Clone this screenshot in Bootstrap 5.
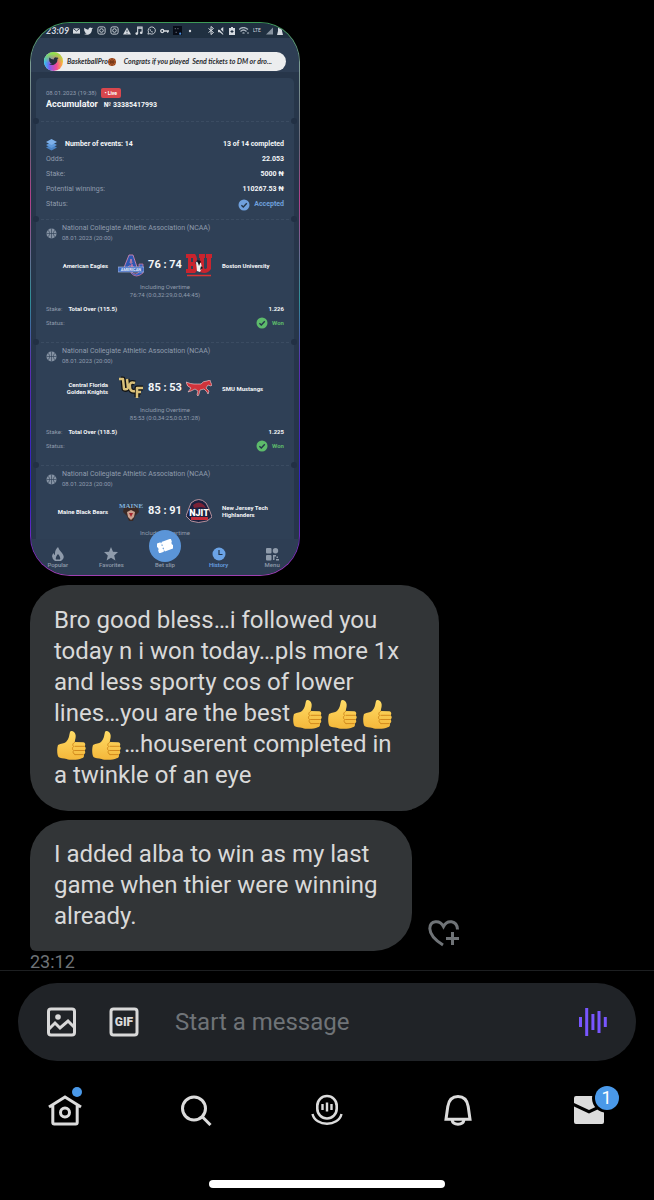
<!DOCTYPE html>
<html lang="en" data-bs-theme="dark">
<head>
<meta charset="utf-8">
<meta name="viewport" content="width=device-width, initial-scale=1">
<title>Messages</title>
<link href="https://cdn.jsdelivr.net/npm/bootstrap@5.3.0/dist/css/bootstrap.min.css" rel="stylesheet">
<style>
body{background:#000;color:#d9d9d9;font-family:Roboto,"Liberation Sans",sans-serif}
svg{display:block;flex-shrink:0}
.thread{padding:22px 30px 0;min-height:0}
/* shared phone capture */
.shot{width:270px;border-radius:40px;padding:1px;background:linear-gradient(180deg,#3d9a57,#7d9a94 8%,#667 22%,#b0408a 32%,#2f8f96 50%,#5b2fae 62%,#2a22c0 85%,#8a2fc0 97%,#a040b0);margin:0}
.screen{border-radius:39px;background:#27364a;overflow:hidden;font-size:6px;line-height:8px;color:#8f9cad}
.sysbar{height:15px;background:#203041;padding:0 16px 0 15px;color:#d5dae0}
.clock{font:italic bold 9px/14px Lato,sans-serif}
.appbar{height:34px;background:#2e3e54}
.toast-line{position:absolute;left:13px;right:13px;top:14px;height:19px;border-radius:10px;background:#ecedee;color:#2a2c30;font:italic bold 7px/18px Lato,sans-serif}
.sheet{padding:6px 5px 0;overflow:hidden}
.slip{background:#2f4056;padding:0 10px;position:relative}
.slip+.slip{border-top:1px dashed #3b4c62}
.slip+.slip::before,.slip+.slip::after{content:"";position:absolute;top:-4px;width:6px;height:6px;border-radius:50%;background:#223044}
.slip::before{left:-3px}.slip::after{right:-3px}
.slip-head{border-radius:5px 5px 0 0;padding-top:10px;padding-bottom:9px}
.slip-sum{padding-top:15px;padding-bottom:7px;font-size:7px;line-height:15px}
.slip-game{padding-top:3px;padding-bottom:12px}
.slip-cut{padding-bottom:2px}
.white{color:#f4f6f8;font-weight:700}
.live{background:#d9474d;color:#fff;border-radius:2px;padding:0 4px;font-weight:700;font-size:5px}
.title-sm{font-size:9px;line-height:13px}
.title-no{font-size:7px}
.head-text{margin-left:5px}
.league{font-size:7px;line-height:10px}
.when{line-height:10px}
.teams{display:grid;grid-template-columns:1fr 26px 42px 26px 1fr;align-items:center;height:28px;margin-top:8px}
.team{line-height:7px;padding:0 10px;white-space:nowrap}
.score{font-size:11px}
.periods{margin:4px 0 3px}
.stat{line-height:14px}
.stat-name{margin:0 auto 0 6px}
.muted{color:#8f9cad}
.won{color:#5dbb6b}.blue{color:#6fa0dd}
.tabs{height:36px;background:#2e3e54;padding-top:8px;color:#8f9bab;position:relative;font-weight:500}
.tabs a{color:inherit;text-decoration:none;flex:1 1 0}
.tabs a.on{color:#6ba3e6}
.tab-gap{height:14px}
.fab{position:absolute;left:50%;top:-9px;margin-left:-16px;width:32px;height:32px;border-radius:50%;background:#5b95d8}
/* bubbles */
.bubble-gap{margin-top:9px}
.msg{background:#323537;border-radius:38px;padding:19px 24px;font-size:24px;line-height:31px;width:fit-content}
.msg-a{max-width:409px;padding:20px 30px 20px 24px}
.msg-b{max-width:382px;border-bottom-left-radius:6px}
.thumb{display:inline-block;vertical-align:-5px;margin:-4px 3px}
.time{font-size:18px;line-height:18px;margin-top:2px;color:#6f7377}
.plain{background:none;border:0;padding:0;color:inherit}
/* composer and tabs */
.foot{border-top:1px solid #1d1f21;padding-top:12px;background:#000}
.composer{height:78px;border-radius:39px;background:#202327;margin:0 18px;padding:0 28px}
.composer input{background:none;border:0;outline:0;color:#d9d9d9;font-size:24px;min-width:0;margin-left:34px}
.composer input::placeholder{color:#6f7377;opacity:1}
.mainnav{height:98px}
.mainnav a{color:#dcdcdc}
.dot{position:absolute;right:0;top:-7px;width:10px;height:10px;border-radius:50%;background:#4a99e9}
.count{position:absolute;left:22px;top:-10px;width:24px;height:24px;border-radius:50%;background:#4a99e9;box-shadow:0 0 0 3px #000;color:#fff;font-size:18px;line-height:24px;text-align:center}
.homebar{width:36%;height:8px;border-radius:4px;background:#fff;margin:21px auto 12px}
</style>
</head>
<body>
<svg width="0" height="0" class="position-absolute" aria-hidden="true">
<defs>
<linearGradient id="skin" x1="0" y1="0" x2="0" y2="1"><stop offset="0" stop-color="#ffdc66"/><stop offset="1" stop-color="#f4b73a"/></linearGradient>
<symbol id="thumb" viewBox="0 0 29 30"><path d="M1 14c3-2 6-1 8-3 3-3 3-6 4-10 .6-2 5-1 5.600 3 .4 3-.8 5-.8 7l8.500.2c2 .2 2.600 2.600 1.200 4 1.700 1 1.500 3.500 0 4.300 1.300 1.200.8 3.400-.8 4 .8 1.600-.2 3.400-2 3.800-4 2-12 1.800-15 .6C6.500 27 3 27.500 1.500 26-.3 23 0 17 1 14z" fill="url(#skin)"/><path d="M18 15.300h9M17.600 19.500H27M18 23.600h8M17.800 11.300c-2 .9-2.700 2.700-1.200 4.200-1.500 1-1.500 3.200 0 4-1 1.400-.5 3.300 1.200 4" fill="none" stroke="#d28a1d" stroke-width="1" stroke-linecap="round"/></symbol>
<symbol id="ball" viewBox="0 0 12 12"><circle cx="6" cy="6" r="5.500" fill="#8592a3"/><path d="M6 .5v11M.5 6h11M2 2.200c2.600 2 2.600 5.600 0 7.600M10 2.200c-2.600 2-2.600 5.600 0 7.600" stroke="#2f4056" fill="none" stroke-width=".7"/></symbol>
<symbol id="tick" viewBox="0 0 12 12"><circle cx="6" cy="6" r="5.500" fill="currentColor"/><path d="M3.400 6.200l1.900 1.800 3.500-3.700" stroke="#24364a" stroke-width="1.400" fill="none"/></symbol>
</defs></svg>
<div class="d-flex flex-column vh-100">
<main class="thread flex-grow-1 overflow-hidden">
<figure class="shot"><div class="screen">
 <div class="sysbar d-flex align-items-center gap-1">
  <span class="clock">23:09</span>
  <svg width="7" height="8" viewBox="0 0 8 8"><rect y="1" width="8" height="6" fill="#d5dae0"/><path d="M0 1l4 3 4-3" stroke="#203041" fill="none"/></svg>
  <svg width="9" height="8" viewBox="0 0 24 20"><path d="M24 3l-3 2c1 9-6 15-13 15-3 0-6-1-8-2 3 0 5-1 7-2-2 0-4-1-5-3h2C2 12 0 10 0 8l2 1C0 7 0 4 1 1c3 3 6 5 11 5 0-6 6-7 8-4l3-1-1 2z" fill="#d5dae0"/></svg>
  <svg width="9" height="9" viewBox="0 0 10 10" fill="none" stroke="#d5dae0"><rect x="1" y="1" width="8" height="8" rx="2"/><circle cx="5" cy="5" r="2"/></svg>
  <svg width="9" height="9" viewBox="0 0 10 10" fill="none" stroke="#d5dae0"><rect x="1" y="1" width="8" height="8" rx="2"/><circle cx="5" cy="5" r="2"/></svg>
  <svg width="8" height="8" viewBox="0 0 10 9"><path d="M5 0l5 9H0z" fill="#d5dae0"/><path d="M5 3v3M5 7v1" stroke="#203041"/></svg>
  <svg width="8" height="9" viewBox="0 0 9 10"><path d="M3 8V1h5v6M3 2.500h5" stroke="#d5dae0" fill="none" stroke-width="1.200"/><circle cx="2" cy="8.500" r="1.500" fill="#d5dae0"/><circle cx="7" cy="7.500" r="1.500" fill="#d5dae0"/></svg>
  <svg width="9" height="9" viewBox="0 0 10 10" fill="none" stroke="#d5dae0"><path d="M1 9l.7-2.200A4 4 0 1 1 3.300 8.500z"/><path d="M3.500 3.500c0 2 1 3 3 3.200"/></svg>
  <svg width="9" height="6" viewBox="0 0 10 6" fill="none" stroke="#d5dae0" stroke-width="1.400"><circle cx="2.500" cy="3" r="1.700"/><path d="M4 3h6M8.500 3v2"/></svg>
  <svg width="9" height="9" viewBox="0 0 10 10"><rect width="10" height="10" fill="#080d18"/><path d="M2 3h1M5 3h1M3 7h1" stroke="#aab"/><circle cx="8" cy="8.500" r="1.200" fill="#4a90e2"/></svg>
  <svg width="6" height="4" viewBox="0 0 6 4"><circle cx="4" cy="2" r="1.200" fill="#d5dae0"/></svg>
  <span class="flex-grow-1"></span>
  <svg width="6" height="9" viewBox="0 0 6 9"><path d="M.5 2.500l5 4-2.500 2v-8l2.500 2-5 4" stroke="#d5dae0" fill="none"/></svg>
  <svg width="7" height="8" viewBox="0 0 8 9"><path d="M0 3h2l4-3v9L2 6H0z" fill="#d5dae0"/><path d="M0 0l8 9" stroke="#203041" stroke-width="1.500"/></svg>
  <svg width="6" height="8" viewBox="0 0 6 8"><path d="M0 1h2V0h2v1h2v7H0z" fill="#d5dae0"/><path d="M3 3v3M1.500 4.500h3" stroke="#203041"/></svg>
  <svg width="10" height="8" viewBox="0 0 10 8" fill="none" stroke="#a9b3be" stroke-width="1.200"><path d="M0 2.500q4.500-4 9 0M1.500 4.500q3-3 6 0M3.500 6.300q1-1 2 0M8 6h2"/></svg>
  <svg width="9" height="8" viewBox="0 0 9 8"><text x="0" y="5" font-size="5" fill="#d5dae0">LTE</text></svg>
  <svg width="7" height="8" viewBox="0 0 8 8"><path d="M8 0v8H0z" fill="#8793a0"/></svg>
  <svg width="6" height="8" viewBox="0 0 6 8"><path d="M1 0h4v4l1 4H0l1-4z" fill="#d5dae0"/></svg>
 </div>
 <div class="appbar position-relative">
  <div class="toast-line d-flex text-nowrap">
   <svg width="19" height="19" viewBox="0 0 19 19"><defs><linearGradient id="r1"><stop offset="0" stop-color="#24c8f5"/><stop offset=".3" stop-color="#7e5cf0"/><stop offset=".65" stop-color="#f0479a"/><stop offset="1" stop-color="#fbc02d"/></linearGradient><linearGradient id="r2" x1="0" y1="0" x2="0" y2="1"><stop offset="0" stop-color="#8af53c"/><stop offset=".6" stop-color="#8af53c" stop-opacity="0"/></linearGradient></defs><circle cx="9.500" cy="9.500" r="9.500" fill="url(#r1)"/><circle cx="9.500" cy="9.500" r="9.500" fill="url(#r2)"/><path transform="translate(5 5) scale(.4)" d="M24 3l-3 2c1 9-6 15-13 15-3 0-6-1-8-2 3 0 5-1 7-2-2 0-4-1-5-3h2C2 12 0 10 0 8l2 1C0 7 0 4 1 1c3 3 6 5 11 5 0-6 6-7 8-4l3-1-1 2z" fill="#24303c"/></svg>
   <span class="ms-1">BasketballPro</span>
   <svg class="align-self-center" width="8" height="8" viewBox="0 0 12 12"><circle cx="6" cy="6" r="6" fill="#b45a2a"/><path d="M6 0v12M0 6h12M2 2c3 2 3 6 0 8M10 2c-3 2-3 6 0 8" stroke="#5c2a12" fill="none"/></svg>
   <span class="ms-1 ps-1">Congrats if you played&nbsp; Send tickets to DM or dro...</span>
  </div>
 </div>
 <div class="sheet">
  <section class="slip slip-head">
   <div class="when d-flex align-items-center">08.01.2023 (19:38)<span class="live ms-1">• Live</span></div>
   <div class="title-sm white">Accumulator <span class="title-no ms-1">№ 33385417993</span></div>
  </section>
  <section class="slip slip-sum">
   <div class="d-flex align-items-center white"><svg width="11" height="12" viewBox="0 0 11 12"><path d="M5.500 5.500L0 8.500l5.500 3 5.500-3z" fill="#4a83c4"/><path d="M5.500 3L0 6l5.500 3L11 6z" fill="#5e98da"/><path d="M5.500 0L0 3l5.500 3L11 3z" fill="#7db0ea"/></svg><span class="ms-2 me-auto">Number of events: 14</span>13 of 14 completed</div>
   <div class="d-flex justify-content-between"><span>Odds:</span><span class="white">22.053</span></div>
   <div class="d-flex justify-content-between"><span>Stake:</span><span class="white">5000 ₦</span></div>
   <div class="d-flex justify-content-between"><span>Potential winnings:</span><span class="white">110267.53 ₦</span></div>
   <div class="d-flex align-items-center blue"><span class="me-auto muted">Status:</span><svg width="12" height="12"><use href="#tick"/></svg><b class="ms-1">Accepted</b></div>
  </section>
  <section class="slip slip-game">
   <div class="d-flex align-items-center"><svg width="11" height="11"><use href="#ball"/></svg><div class="head-text"><div class="league">National Collegiate Athletic Association (NCAA)</div><div class="when">08.01.2023 (20:00)</div></div></div>
   <div class="teams white">
    <div class="team text-end">American Eagles</div>
    <svg width="26" height="24" viewBox="0 0 26 24"><path d="M5 17L11 2h4l5 15h-4l-1-4h-4l-2 4zM12 10h2l-1-4z" fill="#2f57b0" stroke="#e08bb5" stroke-width=".8"/><path d="M14 11v8q3 4 7 0v-8h4v9q-7 6-12 0z" fill="#3164c4" stroke="#e07aa5" stroke-width=".7"/><path d="M0 14h26v5H0z" fill="#3c69c0" stroke="#b9c8ea" stroke-width=".6"/><text x="13" y="18" text-anchor="middle" font-size="4" font-weight="700" fill="#e9eef8">AMERICAN</text></svg>
    <div class="score text-center text-nowrap">76 : 74</div>
    <svg width="26" height="24" viewBox="0 0 26 24"><path d="M0 1h9q4 5 0 9 5 5 0 10H0v-4h2V5H0zM5 5v4h2V5zm0 8v3h2v-3zM13 1h6v4h-1v10q1 2 3 0V5h-1V1h6v4h-1v11q-4 6-11 3V5h-1z" fill="#c9242e" fill-rule="evenodd"/><path d="M10 9l5 1 1 5-2 4-3-1z" fill="#eee"/><path d="M11 7l4 1-2 5zM15 13l2 2-3 2z" fill="#14161c"/><path d="M1 22.500h24" stroke="#d33" stroke-width="1.500"/></svg>
    <div class="team">Boston University</div>
   </div>
   <div class="text-center periods">Including Overtime<br>76:74 (0:0,32:29,0:0,44:45)</div>
   <div class="stat d-flex"><span>Stake:</span><span class="white stat-name">Total Over (115.5)</span><span class="white">1.226</span></div>
   <div class="stat d-flex align-items-center won"><span class="me-auto muted">Status:</span><svg width="12" height="12"><use href="#tick"/></svg><b class="ms-1">Won</b></div>
  </section>
  <section class="slip slip-game">
   <div class="d-flex align-items-center"><svg width="11" height="11"><use href="#ball"/></svg><div class="head-text"><div class="league">National Collegiate Athletic Association (NCAA)</div><div class="when">08.01.2023 (20:00)</div></div></div>
   <div class="teams white">
    <div class="team text-end">Central Florida<br>Golden Knights</div>
    <svg width="26" height="24" viewBox="0 0 26 24" fill="none" stroke-linejoin="round"><g stroke="#111" stroke-width="5"><path d="M3 3h2l1 10q3 1 4-1L9 3M17 7q-6-2-5 4 0 5 5 4M19 21v-9h6M19 16h4"/></g><g stroke="#d9c07a" stroke-width="2.500"><path d="M1 3h4l1 10q3 1 4-1L9 3M17 7q-6-2-5 4 0 5 5 4M19 22v-10h6M19 16h4"/></g></svg>
    <div class="score text-center text-nowrap">85 : 53</div>
    <svg width="26" height="16" viewBox="0 0 26 16"><path d="M0 2q5 2 8 2 4 0 7 0 2-3 6-3l3-1 .5 2L26 5l-1 1-3-1-2 3 3 3-1 3-1-2-3-3-4 1-1 4-1 2-1-1 1-4-3-2-4 2-3 1 3-4q-4-1-5-6z" fill="#d0333b" stroke="#f0d5d8" stroke-width=".6"/></svg>
    <div class="team">SMU Mustangs</div>
   </div>
   <div class="text-center periods">Including Overtime<br>85:53 (0:0,34:25,0:0,51:28)</div>
   <div class="stat d-flex"><span>Stake:</span><span class="white stat-name">Total Over (118.5)</span><span class="white">1.225</span></div>
   <div class="stat d-flex align-items-center won"><span class="me-auto muted">Status:</span><svg width="12" height="12"><use href="#tick"/></svg><b class="ms-1">Won</b></div>
  </section>
  <section class="slip slip-game slip-cut">
   <div class="d-flex align-items-center"><svg width="11" height="11"><use href="#ball"/></svg><div class="head-text"><div class="league">National Collegiate Athletic Association (NCAA)</div><div class="when">08.01.2023 (20:00)</div></div></div>
   <div class="teams white">
    <div class="team text-end">Maine Black Bears</div>
    <svg width="26" height="22" viewBox="0 0 26 22"><path d="M6 7q7-4 14 0l1 5-4 4-2 5h-4l-2-5-4-4z" fill="#3a2a26"/><path d="M9 12l4-2 4 2-1 5-3 3-3-3z" fill="#c9a08f"/><path d="M11 13h4l-2 4z" fill="#a3242c"/><text x="13" y="8" text-anchor="middle" font-family="Liberation Serif" font-size="7" font-weight="700" fill="#7fb2dc">MAINE</text></svg>
    <div class="score text-center text-nowrap">83 : 91</div>
    <svg width="26" height="24" viewBox="0 0 26 24"><path d="M5 4q8-7 15 0l3 6 3 8-5 4q-9 3-16 0l-5-5 3-8z" fill="#1b2140" stroke="#d9a9b0" stroke-width=".8"/><path d="M7 6q6-5 11 0l2 3-5-1-7 1z" fill="#7a2135"/><path d="M5 18h17v3H5z" fill="#c22b39"/><text x="13" y="17" text-anchor="middle" font-size="9" font-weight="900" fill="#fff">NJIT</text></svg>
    <div class="team">New Jersey Tech<br>Highlanders</div>
   </div>
   <div class="text-center mt-1">Including Overtime</div>
  </section>
 </div>
 <nav class="tabs d-flex text-center">
  <a href="#"><svg class="mx-auto" width="12" height="14" viewBox="0 0 12 14"><path d="M6 0q1 3 4 6 4 5-1 8H3Q-2 10 1.500 6q.5 2 1.500 2Q2.500 3 6 0zM6 7q-3 3-2 5.500h4Q9 10 6 7z" fill="currentColor" fill-rule="evenodd"/></svg>Popular</a>
  <a href="#"><svg class="mx-auto" width="14" height="14" viewBox="0 0 14 14"><path d="M7 0l2 4.700 5 .4-3.800 3.300L11.400 13.500 7 10.800l-4.400 2.700 1.200-5.100L0 5.100l5-.4z" fill="currentColor"/></svg>Favorites</a>
  <a href="#"><span class="fab d-flex align-items-center justify-content-center"><svg width="16" height="14" viewBox="0 0 16 14"><path transform="rotate(-20 8 7)" d="M0 2h5v1h1V2h10v3q-2 2 0 4v3H6v-1H5v1H0V9q2-2 0-4zM5 4.500v1.500h1V4.500zm0 3.500v1.500h1V8z" fill="#fff" fill-rule="evenodd"/></svg></span><span class="d-block tab-gap"></span>Bet slip</a>
  <a href="#" class="on"><svg class="mx-auto" width="14" height="14" viewBox="0 0 14 14"><circle cx="7" cy="7" r="6.500" fill="currentColor"/><path d="M7 3v4.500h3.500" stroke="#22344a" stroke-width="1.200" fill="none"/></svg>History</a>
  <a href="#"><svg class="mx-auto" width="13" height="14" viewBox="0 0 13 14" fill="currentColor"><rect y="1" width="5.500" height="5.500" rx="1"/><circle cx="9.500" cy="3.700" r="2.700"/><rect y="8" width="5.500" height="5.500" rx="1"/><path d="M7 8h3v1.500H8.500V13H7zM10.500 9.500H12v1.500h-1.500zM10 12h3v1.500h-3z"/></svg>Menu</a>
 </nav>
</div></figure>
<div class="msg msg-a bubble-gap">Bro good bless…i followed you today n i won today…pls more 1x and less sporty cos of lower lines…you are the best<svg class="thumb" role="img" aria-label="thumbs up" width="29" height="30"><use href="#thumb"/></svg><svg class="thumb" role="img" aria-label="thumbs up" width="29" height="30"><use href="#thumb"/></svg><svg class="thumb" role="img" aria-label="thumbs up" width="29" height="30"><use href="#thumb"/></svg><wbr><svg class="thumb" role="img" aria-label="thumbs up" width="29" height="30"><use href="#thumb"/></svg><svg class="thumb" role="img" aria-label="thumbs up" width="29" height="30"><use href="#thumb"/></svg>…houserent completed in a twinkle of an eye</div>
<div class="d-flex align-items-end gap-3 bubble-gap">
 <div class="msg msg-b">I added alba to win as my last game when thier were winning already.</div>
 <button class="plain" aria-label="Add reaction"><svg width="32" height="32" viewBox="0 0 32 32" fill="none" stroke="#6f7377" stroke-width="3"><path d="M15 26Q2 18 1.800 9.500C2 1 12 .5 15.500 7.500 19 .5 29 1 29.500 10.500M24.500 13v13M18 19.500h13"/></svg></button>
</div>
<div class="time">23:12</div>
</main>
<footer class="foot">
 <form class="composer d-flex align-items-center">
  <button type="button" class="plain" aria-label="Photo"><svg width="31" height="30" viewBox="0 0 31 30" fill="none" stroke="#d9d9d9" stroke-width="3"><rect x="2.500" y="2" width="26" height="26" rx="2.500"/><path d="M3 22l6-6 5 5 8-7 6 6"/><circle cx="12" cy="10" r="2.800" fill="#d9d9d9" stroke="none"/></svg></button>
  <button type="button" class="plain ms-4" aria-label="GIF"><svg class="ms-2" width="30" height="30" viewBox="0 0 30 30"><rect x="2" y="2" width="26" height="26" rx="2.500" fill="none" stroke="#d9d9d9" stroke-width="3"/><text x="15" y="19" text-anchor="middle" font-size="12" font-weight="900" fill="#d9d9d9">GIF</text></svg></button>
  <input class="flex-grow-1" type="text" placeholder="Start a message" aria-label="Message">
  <button type="button" class="plain" aria-label="Voice message"><svg width="30" height="30" viewBox="0 0 30 30" stroke="#7856ff" stroke-width="3"><path d="M2.500 10v10M8.700 1v28M14.900 7v16M21 4v22M27.300 10v10"/></svg></button>
 </form>
 <nav class="mainnav row g-0 align-items-center">
  <div class="col d-flex justify-content-center"><a href="#" class="position-relative" aria-label="Home"><svg width="34" height="32" viewBox="0 0 34 32" fill="none" stroke="currentColor" stroke-width="3"><path d="M1 13L17 3l16 10M4.800 11v17.500q0 1.500 1.500 1.500h21.400q1.500 0 1.500-1.500V11"/><circle cx="17" cy="18.500" r="4.500"/></svg><span class="dot"></span></a></div>
  <div class="col d-flex justify-content-center"><a href="#" aria-label="Search"><svg width="31" height="31" viewBox="0 0 31 31" fill="none" stroke="currentColor" stroke-width="3"><circle cx="13" cy="13.500" r="11.500"/><path d="M21.500 22l8 8"/></svg></a></div>
  <div class="col d-flex justify-content-center"><a href="#" aria-label="Spaces"><svg width="32" height="32" viewBox="0 0 32 32" fill="none" stroke="currentColor" stroke-width="2.600"><rect x="6.300" y="2" width="19.400" height="22.500" rx="9.700"/><path d="M1.500 20c3 13 26 13 29 0M11.500 10v6M16 8.500v9M20.500 10v6" stroke-width="2.400"/></svg></a></div>
  <div class="col d-flex justify-content-center"><a href="#" aria-label="Notifications"><svg width="30" height="32" viewBox="0 0 30 32" fill="none" stroke="currentColor" stroke-width="3"><path d="M3 25.200L4.800 12.500C6 5 10 2.500 15 2.500s9 2.500 10.200 10L27 25.200zM9 26c1 5.500 11 5.500 12 0"/></svg></a></div>
  <div class="col d-flex justify-content-center"><a href="#" class="position-relative" aria-label="Messages"><svg width="32" height="28" viewBox="0 0 32 28"><path d="M1 2q0-2 2-2h26v8l-13 6L1 7zM1 10.500l15 7 15-7V26q0 2-2 2H3q-2 0-2-2z" fill="currentColor"/></svg><span class="count">1</span></a></div>
 </nav>
 <div class="homebar"></div>
</footer>
</div>
<script src="https://cdn.jsdelivr.net/npm/bootstrap@5.3.0/dist/js/bootstrap.bundle.min.js"></script>
</body>
</html>
